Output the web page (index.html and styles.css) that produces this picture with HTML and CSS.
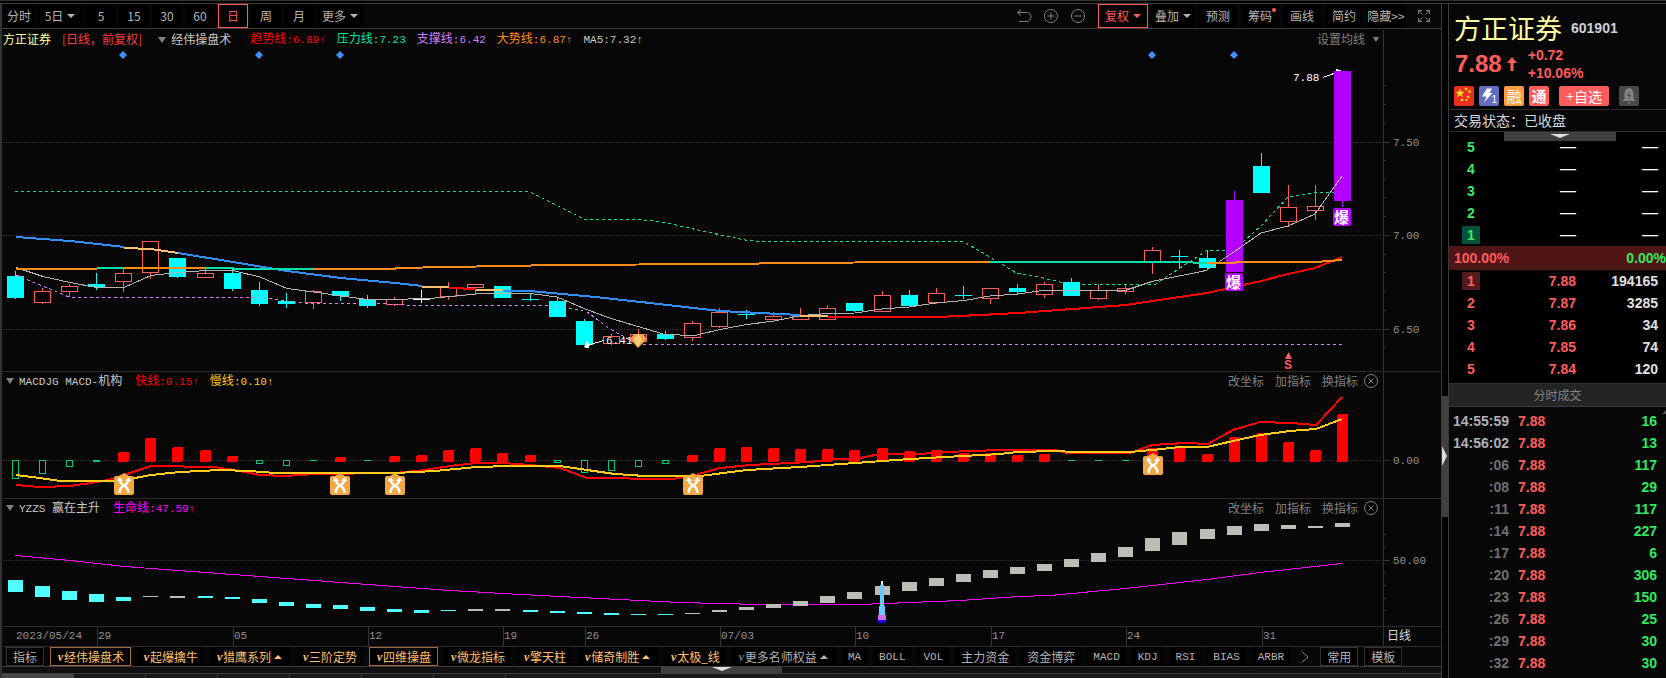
FILE: index.html
```html
<!DOCTYPE html>
<html lang="zh-CN">
<head>
<meta charset="utf-8">
<title>方正证券 601901</title>
<link rel="stylesheet" href="styles.css">
</head>
<body>
<div class="topstrip"></div>
<div class="app">
  <main class="left">
    <nav class="toolbar">
      <button class="tb">分时</button>
      <button class="tb wide">5日<i class="down"></i></button>
      <button class="tb">5</button>
      <button class="tb">15</button>
      <button class="tb">30</button>
      <button class="tb">60</button>
      <button class="tb on">日</button>
      <button class="tb">周</button>
      <button class="tb">月</button>
      <button class="tb wide">更多<i class="down"></i></button>
      <span class="spacer"></span>
      <div class="tools">
        <button class="ico" aria-label="撤销"><svg width="16" height="16" viewBox="0 0 16 16"><path d="M5 1.500L1.500 4.500L5 7.500M1.500 4.500H10.500A4 4 0 0 1 10.500 13.500H3"/></svg></button>
        <button class="ico" aria-label="放大"><svg width="16" height="16" viewBox="0 0 16 16"><circle cx="8" cy="8" r="6.500"/><path d="M8 4.500V11.500M4.500 8H11.500"/></svg></button>
        <button class="ico" aria-label="缩小"><svg width="16" height="16" viewBox="0 0 16 16"><circle cx="8" cy="8" r="6.500"/><path d="M4.500 8H11.500"/></svg></button>
      </div>
      <button class="tb on adj">复权<i class="down"></i></button>
      <button class="tb mid drop">叠加<i class="down"></i></button>
      <button class="tb mid">预测</button>
      <button class="tb mid dot">筹码</button>
      <button class="tb mid">画线</button>
      <button class="tb mid">简约</button>
      <button class="tb hide">隐藏&gt;&gt;</button>
      <button class="ico full" aria-label="全屏"><svg width="14" height="14" viewBox="0 0 14 14"><path d="M1.500 5V1.500H5M9 1.500H12.500V5M12.500 9V12.500H9M5 12.500H1.500V9M2 2L5.500 5.500M12 2L8.500 5.500M12 12L8.500 8.500M2 12L5.500 8.500"/></svg></button>
    </nav>

    <section class="panel">
      <svg id="price" viewBox="2 29 1439 342"></svg>
      <div class="legend">
        <span class="name">方正证券</span>
        <span class="mode">[日线，前复权]</span>
        <span class="ind"><i class="tri"></i>经伟操盘术</span>
        <span class="c-red">趋势线<b>:6.89↑</b></span>
        <span class="c-green">压力线<b>:7.23</b></span>
        <span class="c-violet">支撑线<b>:6.42</b></span>
        <span class="c-orange">大势线<b>:6.87↑</b></span>
        <span class="c-gray"><b>MA5:7.32↑</b></span>
        <span class="spacer"></span>
        <button class="link ma">设置均线<i class="down small"></i></button>
      </div>
    </section>

    <section class="panel">
      <svg id="macd" viewBox="2 372 1439 126"></svg>
      <div class="legend sub">
        <span class="ind"><i class="tri"></i><b>MACDJG MACD-</b>机构</span>
        <span class="c-red">快线<b>:0.15↑</b></span>
        <span class="c-yellow">慢线<b>:0.10↑</b></span>
        <span class="spacer"></span>
        <button class="link">改坐标</button><button class="link">加指标</button><button class="link">换指标</button>
        <button class="ico close" aria-label="关闭"><svg width="14" height="14" viewBox="0 0 14 14"><circle cx="7" cy="7" r="6.500"/><path d="M4.500 4.500L9.500 9.500M9.500 4.500L4.500 9.500"/></svg></button>
      </div>
    </section>

    <section class="panel">
      <svg id="life" viewBox="2 499 1439 127"></svg>
      <div class="legend sub">
        <span class="ind"><i class="tri"></i><b>YZZS </b>赢在主升</span>
        <span class="c-magenta">生命线<b>:47.59↑</b></span>
        <span class="spacer"></span>
        <button class="link">改坐标</button><button class="link">加指标</button><button class="link">换指标</button>
        <button class="ico close" aria-label="关闭"><svg width="14" height="14" viewBox="0 0 14 14"><circle cx="7" cy="7" r="6.500"/><path d="M4.500 4.500L9.500 9.500M9.500 4.500L4.500 9.500"/></svg></button>
      </div>
    </section>

    <section class="panel">
      <svg id="dates" viewBox="2 627 1439 19"></svg>
    </section>

    <nav class="tabs">
      <button class="tab box">指标</button>
      <button class="tab vip sel"><em>v</em>经伟操盘术</button>
      <button class="tab vip"><em>v</em>起爆擒牛</button>
      <button class="tab vip more"><em>v</em>猎鹰系列<i class="up"></i></button>
      <button class="tab vip"><em>v</em>三阶定势</button>
      <button class="tab vip sel"><em>v</em>四维操盘</button>
      <button class="tab vip"><em>v</em>微龙指标</button>
      <button class="tab vip"><em>v</em>擎天柱</button>
      <button class="tab vip more"><em>v</em>储奇制胜<i class="up"></i></button>
      <button class="tab vip"><em>v</em>太极_线</button>
      <button class="tab more"><em class="dim">v</em>更多名师权益<i class="up"></i></button>
      <button class="tab"><b>MA</b></button>
      <button class="tab"><b>BOLL</b></button>
      <button class="tab"><b>VOL</b></button>
      <button class="tab">主力资金</button>
      <button class="tab">资金博弈</button>
      <button class="tab"><b>MACD</b></button>
      <button class="tab"><b>KDJ</b></button>
      <button class="tab"><b>RSI</b></button>
      <button class="tab"><b>BIAS</b></button>
      <button class="tab"><b>ARBR</b></button>
      <button class="ico next" aria-label="更多指标"><svg width="10" height="14" viewBox="0 0 10 14"><path d="M1.500 1.500L8 7L1.500 12.500"/></svg></button>
      <button class="tab box">常用</button>
      <button class="tab box">模板</button>
    </nav>
    <div class="pull"><button class="grip" aria-label="展开"><svg width="20" height="4" viewBox="0 0 20 4"><path d="M0 0H20L10 4Z"/></svg></button></div>
    <div class="dock"><span class="now"></span><span></span><span></span><span></span><span></span><span></span><span></span></div>
  </main>

  <div class="split"><button class="vgrip" aria-label="收起"><svg width="5" height="20" viewBox="0 0 5 20"><path d="M0 0L5 10L0 20Z"/></svg></button></div>

  <aside class="quote">
    <header>
      <div class="title"><h1>方正证券</h1><span class="code">601901</span></div>
      <div class="last">
        <span class="px">7.88</span>
        <svg width="10" height="16" viewBox="0 0 10 16"><path d="M5 1L10 7H6.500V15H3.500V7H0Z"/></svg>
        <div class="chg"><span>+0.72</span><span>+10.06%</span></div>
      </div>
      <div class="badges">
        <span class="bd flag"><svg width="20" height="20" viewBox="0 0 20 20"><path d="M6 2.500L7.200 5.800L10.500 5.900L7.900 8L8.800 11.200L6 9.300L3.200 11.200L4.100 8L1.500 5.900L4.800 5.800Z"/><circle cx="12" cy="3" r="1.300"/><circle cx="15.500" cy="5.500" r="1.300"/><circle cx="14" cy="11" r="1.300"/><circle cx="8" cy="14" r="1.300"/><circle cx="12.500" cy="14" r="1"/></svg></span>
        <span class="bd bolt"><svg width="20" height="20" viewBox="0 0 20 20"><path d="M8 2.500H13L10.500 7H13.500L5 16.500L7.500 10.500H3Z"/></svg><small>1</small></span>
        <span class="bd rong">融</span>
        <span class="bd tong">通</span>
        <button class="add">+自选</button>
        <button class="bd bell" aria-label="提醒"><svg width="20" height="20" viewBox="0 0 20 20"><path d="M10 2C6 3 5.500 6 5.500 9V13L3 15H17L14.500 13V9C14.500 6 14 3 10 2ZM8 16.500H12L10 18Z"/><path class="z" d="M11 6L8.500 9.500H11.500L9 13"/></svg></button>
      </div>
      <p class="state">交易状态：已收盘</p>
    </header>
    <div class="book">
      <button class="tgrip" aria-label="展开"><svg width="20" height="4" viewBox="0 0 20 4"><path d="M0 0H20L10 4Z"/></svg></button>
      <table class="lv sell">
        <tr><th>5</th><td class="none">—</td><td class="none">—</td></tr>
        <tr><th>4</th><td class="none">—</td><td class="none">—</td></tr>
        <tr><th>3</th><td class="none">—</td><td class="none">—</td></tr>
        <tr><th>2</th><td class="none">—</td><td class="none">—</td></tr>
        <tr><th><span>1</span></th><td class="none">—</td><td class="none">—</td></tr>
      </table>
      <div class="ratio"><span>100.00%</span><span class="g">0.00%</span></div>
      <table class="lv buy">
        <tr><th><span>1</span></th><td>7.88</td><td class="vol">194165</td></tr>
        <tr><th>2</th><td>7.87</td><td class="vol">3285</td></tr>
        <tr><th>3</th><td>7.86</td><td class="vol">34</td></tr>
        <tr><th>4</th><td>7.85</td><td class="vol">74</td></tr>
        <tr><th>5</th><td>7.84</td><td class="vol">120</td></tr>
      </table>
    </div>
    <h2>分时成交</h2>
    <div class="deals">
      <table>
        <tr class="fulltime"><th>14:55:59</th><td>7.88</td><td class="q">16</td></tr>
        <tr class="fulltime"><th>14:56:02</th><td>7.88</td><td class="q">13</td></tr>
        <tr><th>:06</th><td>7.88</td><td class="q">117</td></tr>
        <tr><th>:08</th><td>7.88</td><td class="q">29</td></tr>
        <tr><th>:11</th><td>7.88</td><td class="q">117</td></tr>
        <tr><th>:14</th><td>7.88</td><td class="q">227</td></tr>
        <tr><th>:17</th><td>7.88</td><td class="q">6</td></tr>
        <tr><th>:20</th><td>7.88</td><td class="q">306</td></tr>
        <tr><th>:23</th><td>7.88</td><td class="q">150</td></tr>
        <tr><th>:26</th><td>7.88</td><td class="q">25</td></tr>
        <tr><th>:29</th><td>7.88</td><td class="q">30</td></tr>
        <tr><th>:32</th><td>7.88</td><td class="q">30</td></tr>
      </table>
    </div>
  </aside>
</div>
<script src="chart.js"></script>
</body>
</html>
```

FILE: styles.css
```css
* { box-sizing: border-box; }
body {
  margin: 0;
  min-height: 100vh;
  background: #070707;
  color: #b4b4b4;
  font: 12px/18px "Noto Sans CJK SC", sans-serif;
  display: flex;
  flex-direction: column;
  overflow-x: hidden;
}
button {
  margin: 0;
  padding: 0;
  border: 0;
  background: none;
  color: inherit;
  font: inherit;
  white-space: nowrap;
}
b { font: 11px/18px "Liberation Mono", monospace; }
i { display: inline-block; flex: none; }
.spacer { flex: 1; }

.topstrip { height: 4px; border-top: 1px solid #333; border-bottom: 1px solid #3c3c3c; background: #000; }
.app { flex: 1; display: grid; grid-template-columns: minmax(0, 1fr) 6px 218px; }
.left { border-left: 2px solid #333; border-right: 1px solid #3c3c3c; display: flex; flex-direction: column; }

.toolbar { display: flex; align-items: stretch; gap: 3px; height: 25px; padding-left: 2px; border-bottom: 1px solid #3c3c3c; }
.tb { width: 30px; background: #000; position: relative; display: flex; align-items: center; justify-content: center; gap: 4px; }
.tb.wide { width: 46px; }
.tb.on { border: 1px solid #ff5c5c; color: #ff5c5c; }
.tb.mid { width: 38px; }
.tb.drop { width: 44px; }
.tb.adj { width: 50px; }
.tb.hide { width: 40px; }
.tb.mid + .tb.mid { margin-left: 1px; }
.tb.dot::after { content: ""; position: absolute; top: 4px; right: 3px; width: 4px; height: 4px; border-radius: 50%; background: #ff5c5c; }
.down { border: 4px solid transparent; border-top-color: currentColor; border-bottom: 0; }
.down.small { border-width: 3px; border-top-width: 5px; border-bottom: 0; }
.up { border: 4px solid transparent; border-bottom-color: currentColor; border-top: 0; margin-left: 3px; }
.ico { display: flex; align-items: center; justify-content: center; color: #808080; }
.ico svg { fill: none; stroke: currentColor; }
.tools { display: flex; gap: 11px; margin-right: 9px; }
.full { width: 14px; margin: 0 10px 0 8px; }

.panel { position: relative; border-bottom: 1px solid #2b2b2b; }
.panel > svg { display: block; width: 100%; height: auto; }
.panel text { font: 11px "Liberation Mono", monospace; fill: #909090; }
.panel text.white { fill: #fff; }
.panel text.cjk { font: 12px "Noto Sans CJK SC", sans-serif; fill: #d8d8d8; }
.panel text.bao { font: bold 15px "Noto Sans CJK SC", sans-serif; fill: #fff; }
.panel text.s { font: bold 12px "Liberation Sans", sans-serif; fill: #ff5c5c; }
.legend { position: absolute; inset: 0 62px auto 1px; display: flex; align-items: center; white-space: nowrap; color: #c8c8c8; }
.legend span { margin-right: 11px; }
.legend .spacer { margin: 0; }
.legend .name { color: #ffffa0; }
.legend .mode { color: #ff3c3c; margin-right: 16px; }
.legend .ind { margin-right: 19px; }
.legend.sub { inset: -1px 62px auto 4px; }
.legend.sub .ind { margin-right: 13px; }
.tri { border: 4px solid transparent; border-top: 6px solid #808080; border-bottom: 0; margin-right: 5px; vertical-align: 1px; }
.link { color: #808080; margin-right: 11px; }
.ma { display: flex; align-items: center; gap: 8px; margin-right: 0; }
.c-red { color: #f00; }
.c-green { color: #00e4a4; }
.c-violet { color: #d580ff; }
.c-orange { color: #ff8c1a; }
.c-yellow { color: #ffcc1a; }
.c-magenta { color: #f0f; }
.legend .link + .close { margin: 0 1px 0 -5px; }

.tabs { display: flex; gap: 6px; height: 20px; padding-left: 4px; border-bottom: 1px solid #3c3c3c; overflow: hidden; }
.tab { height: 19px; padding: 0 6px; background: #000; display: flex; align-items: center; flex: none; }
.tab.more { padding-right: 8px; }
.tab.box { border: 1px solid #333; }
.tab.vip { color: #ffc06c; }
.tab.sel { border: 1px solid #a0683c; }
.tab em { width: 7px; font: italic bold 12px/18px "Liberation Serif", serif; }
.tab em.dim { color: #777; }
.next { margin: 0 4px; }
.pull { height: 7px; background: #101010; border-bottom: 1px solid #3c3c3c; display: flex; justify-content: center; }
.grip { width: 121px; height: 6px; background: #404040; display: flex; justify-content: center; }
.grip svg, .tgrip svg, .vgrip svg { fill: #ddd; display: block; }
.dock { flex: 1; min-height: 4px; background: #1a1a1a; display: flex; }
.dock span { width: 72px; border-right: 1px solid #3c3c3c; }
.dock .now { background: #484848; }

.split { background: #000; display: flex; align-items: center; padding-top: 230px; }
.vgrip { width: 6px; height: 121px; background: #404040; display: flex; align-items: center; }

.quote { border-left: 1px solid #3c3c3c; font: bold 14px/22px "Liberation Sans", "Noto Sans CJK SC", sans-serif; color: #ff5c5c; overflow: hidden; }
.quote header { display: flex; flex-direction: column; }
.title { display: flex; align-items: center; gap: 9px; height: 40px; padding: 8px 0 0 5px; }
h1 { margin: 0; font: 27px/32px "Noto Sans CJK SC", sans-serif; color: #ffffa0; }
.code { color: #d0d0d8; }
.last { display: flex; align-items: center; gap: 5px; height: 40px; padding-left: 6px; }
.px { font-size: 24px; line-height: 32px; }
.last svg { fill: #ff5c5c; }
.chg { display: flex; flex-direction: column; line-height: 18px; margin-left: 6px; }
.badges { display: flex; gap: 5px; height: 25px; padding: 2px 0 0 5px; }
.bd { width: 20px; height: 20px; border-radius: 2px; color: #fff; display: flex; justify-content: center; position: relative; font: 15px/20px "Noto Sans CJK SC", sans-serif; flex: none; }
.flag { background: #e8301c; }
.flag svg { fill: #ffe020; }
.bolt { background: #646cc0; }
.bolt svg { fill: #fff; }
.bolt small { position: absolute; right: 2px; bottom: 0; font: 10px/12px "Liberation Sans", sans-serif; }
.rong { background: #ff9c40; }
.tong { background: #ff5c5c; font-weight: bold; }
.add { width: 50px; height: 20px; margin: 0 5px; border-radius: 2px; background: #ff5c5c; color: #fff; font: 14px/20px "Noto Sans CJK SC", sans-serif; }
.bell { background: #484848; }
.bell svg { fill: #848484; }
.bell .z { fill: none; stroke: #484848; }
.state { margin: 0; height: 23px; border: solid #2b2b2b; border-width: 1px 0; padding-left: 5px; font: 14px/20px "Noto Sans CJK SC", sans-serif; color: #d8d8d8; }
.book { position: relative; background: #000; padding: 4px 0 3px; border-bottom: 1px solid #333; }
.tgrip { position: absolute; top: 0; left: 55px; width: 112px; height: 9px; background: #404040; display: flex; justify-content: center; padding-top: 2px; }
table { width: 100%; border-collapse: collapse; table-layout: fixed; }
th, td { padding: 0; height: 22px; font: inherit; line-height: 22px; text-align: right; }
.lv th { width: 44px; text-align: center; }
.lv td { width: 83px; }
.lv td:last-child { width: auto; padding-right: 8px; }
.lv th span { display: block; width: 18px; height: 18px; line-height: 18px; margin: 0 auto; }
.sell th { color: #40e868; }
.sell th span { background: #00523f; }
.buy th span { background: #521c1e; }
.lv .none { color: #fff; font: 16px/20px "Liberation Sans", sans-serif; }
.lv .vol { color: #e0e0e0; }
.ratio { height: 24px; line-height: 24px; padding-left: 5px; background: #501515; display: flex; justify-content: space-between; }
.g, .q { color: #33e860; }
h2 { margin: 0; height: 23px; border-bottom: 1px solid #3c3c3c; background: #242424; color: #848484; font: 12px/22px "Noto Sans CJK SC", sans-serif; text-align: center; }
.deals { position: relative; padding-top: 3px; }
.deals::after { content: ""; position: absolute; top: 3px; right: 0; border: solid transparent; border-width: 0 0 4px 4px; border-bottom-color: #555; }
.deals th { width: 60px; color: #707070; }
.deals .fulltime th { color: #b0b0b8; }
.deals td { padding-left: 9px; text-align: left; }
.deals .q { padding-right: 9px; text-align: right; }
```

FILE: chart.js
```js
const RED = '#ff5c5c', CYAN = '#00ffff', PURPLE = '#b400ff', AXIS = '#333';
const cx = i => Math.round(15 + 27.08 * i);

const el = (tag, attrs, text) => {
  const a = Object.entries(attrs).map(([k, v]) => `${k}="${v}"`).join(' ');
  return `<${tag} ${a}>${text || ''}</${tag}>`;
};
const rect = (x, y, w, h, fill, extra = {}) =>
  el('rect', { x, y, width: w, height: h, fill, 'shape-rendering': 'crispEdges', ...extra });
const line = (points, stroke, width = 1, extra = {}) =>
  el('polyline', { points, fill: 'none', stroke, 'stroke-width': width, 'shape-rendering': 'crispEdges', ...extra });
const text = (x, y, s, cls = '') => el('text', { x, y, class: cls }, s);
const grid = y => line(`2,${y} 1383,${y}`, '#303030', 1, { 'stroke-dasharray': '1 1' });
const axis = (y1, y2) => rect(1383, y1, 1, y2 - y1, AXIS);
const tick = (y, w) => rect(1384, y, w, 1, AXIS);

/* kind, body top, body bottom, high, low */
const candles = [
  ['c',276,298,271,299],['r',291,302,288,304],['r',286,291,284,297],['c',284,287,273,290],
  ['r',273,281,269,292],['r',241,272,241,279],['c',258,277,258,278],['r',273,277,268,277],
  ['c',273,289,269,291],['c',290,304,282,306],['c',301,304,293,308],['r',291,302,290,309],
  ['c',291,296,291,301],['c',299,306,295,308],['r',299,304,297,306],['w',299,300,290,303],
  ['r',287,296,282,300],['r',284,287,284,294],['c',286,298,286,298],['c',299,300,293,301],
  ['c',301,317,297,317],['c',321,345,319,345],['r',336,343,334,345],['r',334,341,329,341],
  ['c',334,339,331,340],['r',323,337,321,341],['r',312,326,308,328],['c',314,315,310,319],
  ['r',316,319,312,320],['r',316,319,308,320],['r',308,319,305,320],['c',303,311,303,312],
  ['r',295,311,291,311],['c',295,306,290,306],['r',293,302,288,304],['c',295,296,286,299],
  ['r',288,298,288,304],['c',288,292,284,294],['r',284,294,282,298],['c',282,296,278,296],
  ['r',290,298,284,300],['r',288,291,285,294],['r',250,262,247,274],['c',256,257,250,269],
  ['c',258,268,250,269],['p',200,272,191,272],['c',166,193,153,193],['r',207,221,185,227],
  ['r',206,210,185,220],['p',71,201,71,207]
];

let s = axis(30, 371) + [142.5, 235.5, 329.5].map(grid).join('');
[85,104,123,160,179,197,216,254,272,291,310,347].forEach(y => s += tick(y, 2));
[142,235,329].forEach(y => s += tick(y, 6));
s += text(1393, 146, '7.50') + text(1393, 239, '7.00') + text(1393, 333, '6.50');

const dash = { 'stroke-dasharray': '3 3' };
s += line('15,191.5 529,191.5 543,198.5 585,219.5 640,219.5 665,222.5 700,230.5 747,240.5 765,241.5 963,241.5 1000,263 1016,273 1043,278 1071,284.5 1155,284.5 1180,268 1207,250.5 1233,250.5 1245,240 1260,227 1288,197 1315,192.500 1335,192.500', '#00e4a4', 1, dash);

candles.forEach(([k, t, b, h, l], i) => {
  const x = cx(i), col = { c: CYAN, r: RED, w: '#fff', p: PURPLE }[k];
  s += rect(x, h, 1, l - h, col);
  if (k === 'r') s += rect(x - 7.5, t + .5, 16, b - t, '#000', { stroke: RED });
  else s += rect(x - 8, t, 17, b - t, col);
});

s += line('16,275 70,297.5 260,297.5 307,303.5 380,303.5 415,305.5 540,305.5 565,307 587,312 610,329 632,341 640,344.5 1342,344.5', '#d580ff', 1, dash);
s += line('16,267.500 43,276.500 70,282.500 97,287.500 124,287.500 151,275.500 178,272.500 206,270.500 233,270.500 260,277 287,288.500 314,292 341,296 368,299.500 395,299.500 435,298 476,294 503,293.500 530,293.500 557,297 584,308.500 611,318.500 638,326.500 665,334.500 695,335.500 720,329.500 747,324.500 774,321 801,315.500 828,313.500 855,313 882,309 909,307 936,303 964,300.500 990,296 1018,294 1043,290.500 1125,290.500 1152,281.500 1179,276 1206,270.500 1233,252.500 1261,233 1288,226 1315,214 1342,176', '#b4b4b4');

const BLUE = '#3090ff', PEACH = '#ffc070', ORANGE = '#ff8c1a', TEAL = '#00e0a8';
[
  ['16,237 43,239 70,241 97,244 124,247', BLUE],
  ['124,248 151,249 178,253', PEACH],
  ['178,253 233,262 287,271 341,278 395,283 422,286', BLUE],
  ['422,287 449,287', PEACH], ['449,288 476,289', '#f00'], ['476,290 503,290', PEACH],
  ['503,291 530,291 540,292 595,297 650,303 720,311 760,313 800,315', BLUE],
  ['800,316 828,316', PEACH],
  ['828,317 937,317 980,315 1018,313 1072,309 1126,305 1152,301 1207,293 1243,285 1261,281 1288,274 1315,268 1342,257', '#f00'],
  ['16,269 97,269', ORANGE], ['97,268 124,268', TEAL], ['124,268 206,268', ORANGE],
  ['206,268 233,268 234,269 314,269', TEAL],
  ['314,269 395,269 396,268 450,267 504,266 558,265 720,264 800,263 910,262 990,262', ORANGE],
  ['990,262 1179,262 1207,263', TEAL], ['1207,263 1235,263 1236,262 1315,262 1342,260', ORANGE]
].forEach(([p, c]) => s += line(p, c, 2));

[123, 259, 340, 1152, 1234].forEach(x => s += el('path', { d: `M${x} 51l4 4l-4 4l-4-4z`, fill: '#4090ff' }));
s += text(1293, 81, '7.88', 'white') + line('1323,77.5 1334,73.5', '#fff') + rect(1336, 69, 2, 2, '#fff') + rect(1336, 70, 5, 1, '#fff');
s += line('604,340.5 590,344.5', '#fff') + el('path', { d: 'M587 341l2 3h3l-3 2v2h-3l-2-1z', fill: '#fff' });
s += el('path', { d: 'M634 334H643L647 339L638 348L630 339Z', fill: '#f0a848' }) + el('path', { d: 'M634 339L638 334L642 339L638 347Z', fill: '#ffcc80' });
s += text(606, 344, '6.41', 'white');
[[1225, 273], [1333, 208]].forEach(([x, y]) => {
  s += el('rect', { x, y, width: 18, height: 18, rx: 2, fill: PURPLE }) + text(x + 1, y + 15, '爆', 'bao');
});
s += el('path', { d: 'M1288.500 352L1292 359H1285Z', fill: RED }) + text(1284, 369, 'S', 's');
document.getElementById('price').innerHTML = s;

/* positive: top of a solid bar; negative: bottom of a hollow one; small values draw a dash */
const bars = [-479,-474,-467,-2,452,438,447,450,456,-464,-466,-1,457,-1,456,455,450,448,453,455,-463,-473,-471,-467,-464,455,448,447,448,449,449,450,448,451,450,453,453,455,454,-1,-1,-1,448,448,454,437,433,442,450,414];
s = axis(372, 498) + grid(460.5) + tick(460, 6) + text(1393, 464, '0.00');
bars.forEach((v, i) => {
  const x = cx(i);
  if (v > 0) s += rect(x - 5, v, 11, 462 - v, '#f00', { rx: 2 });
  else if (v > -3) s += rect(x - 3, 460, 7, -v, '#00c888');
  else s += rect(x - 2.5, 460.5, 6, -v - 461, '#070707', { stroke: '#00c888' });
});
s += line('16,485 40,487 70,486 97,482 108,480 124,475 151,466 215,467 240,471 260,475 285,476 314,474 395,473 425,470 450,466 476,463 503,463 530,465 560,468 587,478 672,479 695,475 720,468 750,465 790,463 810,462 835,459 855,459 880,454 920,454 945,452 1000,450 1055,450 1067,453 1130,453 1152,445 1185,443 1208,444 1233,430 1260,422 1290,423 1316,425 1342,397', '#f00', 2);
s += line('16,475 40,478 60,481 108,481 124,480 151,475 180,472 220,470 250,471 275,473 395,473 435,471 476,467 510,466 560,466 587,470 615,474 645,476 700,476 747,470 800,467 855,463 910,459 945,457 1000,454 1018,452 1055,451 1075,452 1130,452 1152,450 1180,447 1207,447 1233,441 1260,435 1290,431 1316,429 1342,419', '#ffcc1a', 2);
[[124, 473], [340, 473], [395, 473], [693, 473], [1153, 453]].forEach(([x, y]) => {
  s += `<g transform="translate(${x - 10} ${y})">`
    + el('path', { d: 'M10 0L15 3H18Q20 3 20 5V20Q20 22 18 22H2Q0 22 0 20V5Q0 3 2 3H5Z', fill: '#f5a742' })
    + el('path', { d: 'M5.500 20Q5.500 15 10 12.500T14.500 6M14.500 20Q14.500 15 10 12.500T5.500 6', fill: 'none', stroke: '#fff', 'stroke-width': 2.5 })
    + el('path', { d: 'M2.500 8L5.500 4L9 8ZM11 8L14.500 4L17.500 8Z', fill: '#fff' }) + '</g>';
});
document.getElementById('macd').innerHTML = s;

/* top, bottom, rising */
const blocks = [[580,592],[586,597],[591,600],[594,602],[597,601],[596,597,1],[596,598,1],[596,598],[597,599],[599,603],[602,606],[604,608],[605,609],[607,611],[609,612],[610,613],[610,611],[609,611,1],[609,611,1],[610,612],[611,613],[612,614],[613,615],[614,615],[614,615],[613,614,1],[610,612,1],[607,610,1],[604,608,1],[601,606,1],[596,603,1],[592,599,1],[586,595,1],[582,591,1],[578,586,1],[574,582,1],[570,578,1],[567,574,1],[564,571,1],[559,567,1],[553,562,1],[547,557,1],[538,551,1],[532,545,1],[529,539,1],[526,535,1],[524,531,1],[525,529,1],[526,528,1],[523,527,1]];
s = axis(499, 626) + grid(560.5) + tick(560, 6) + text(1393, 564, '50.00');
[534, 547, 572, 585, 598, 610].forEach(y => s += tick(y, 2));
s += line('15,555.5 70,560.5 124,566.5 233,574.5 314,580.5 395,586.5 450,590.5 503,593.5 540,595.5 600,598.5 680,602.5 760,604.5 860,604.5 960,600.5 1018,596.5 1050,595.5 1125,588.5 1207,579.5 1260,572.5 1342,563.5', '#f0f');
blocks.forEach(([t, b, up], i) => s += rect(cx(i) - 7, t, 15, b - t, up ? '#bcbcb8' : '#50ffff'));
s += rect(881, 581, 2, 5, '#eee') + rect(880, 585, 4, 22, '#68c8ff') + rect(879, 606, 6, 9, '#68c8ff')
  + rect(878, 615, 8, 5, '#d868f0') + rect(878, 620, 8, 3, '#1800ff');
document.getElementById('life').innerHTML = s;

s = axis(627, 646) + text(16, 639, '2023/05/24') + text(1387, 640, '日线', 'cjk');
[[97,'29'],[233,'05'],[368,'12'],[503,'19'],[585,'26'],[720,'07/03'],[855,'10'],[991,'17'],[1126,'24'],[1262,'31']]
  .forEach(([x, d]) => s += rect(x, 627, 1, 19, AXIS) + text(x + 1, 639, d));
document.getElementById('dates').innerHTML = s;
```
